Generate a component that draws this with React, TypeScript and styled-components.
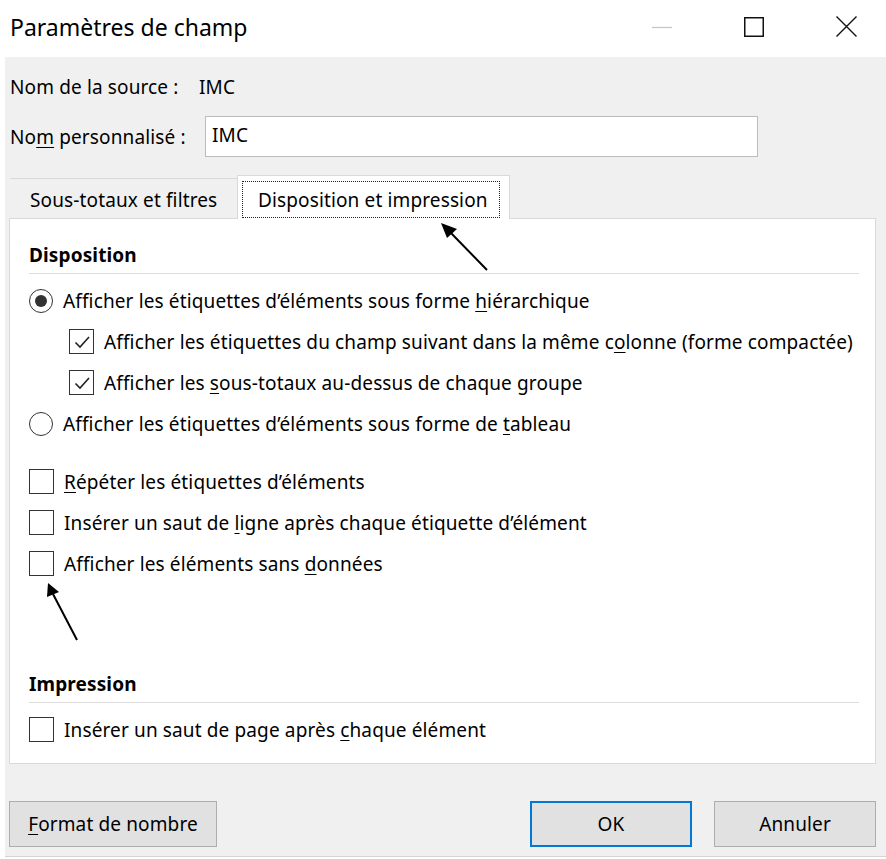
import React from "react";
import styled, { createGlobalStyle } from "styled-components";

const Global = createGlobalStyle`
  html, body { margin: 0; padding: 0; background: #ffffff; }
  body { font-family: "Noto Sans", "Open Sans", Arial, sans-serif; color: #000; }
  u { text-decoration-thickness: 1px; text-underline-offset: 3px; }
`;

const Window = styled.div`
  position: relative;
  width: 886px;
  height: 859px;
  display: flex;
  flex-direction: column;
  background: #fff;
  overflow: hidden;
`;

const TitleBar = styled.div`
  height: 57px;
  flex: 0 0 57px;
  display: flex;
  align-items: center;
  padding-left: 10px;
  background: #fff;
`;

const Title = styled.div`
  flex: 1;
  font-size: 23px;
  color: #000;
  margin-top: -3px;
`;

const WinControls = styled.div`
  display: flex;
  align-items: center;
  height: 100%;
  margin-top: -4px;
  margin-right: -6px;
`;

const WinButton = styled.div<{ $w: number }>`
  width: ${(p) => p.$w}px;
  height: 100%;
  display: flex;
  align-items: center;
  justify-content: center;
`;

const Body = styled.div`
  flex: 1;
  margin: 0 0 2px 5px;
  padding: 15px 10px 0 4px;
  background: #f0f0f0;
  border-bottom: 1px solid #d4d4d4;
  display: flex;
  flex-direction: column;
  font-size: 19px;
  letter-spacing: 0.13px;
`;

const FieldRow = styled.div<{ $h: number; $mt: number }>`
  display: flex;
  align-items: center;
  height: ${(p) => p.$h}px;
  margin-top: ${(p) => p.$mt}px;
  padding-left: 1px;
`;

const Label = styled.div<{ $w: number }>`
  width: ${(p) => p.$w}px;
  flex: 0 0 ${(p) => p.$w}px;
  white-space: nowrap;
`;

const TextInput = styled.div`
  width: 545px;
  height: 39px;
  border: 1px solid #bcbcbc;
  background: #fff;
  box-sizing: content-box;
  padding: 0 0 0 6px;
  line-height: 36px;
`;

const TabStrip = styled.div`
  display: flex;
  align-items: flex-end;
  height: 44px;
  margin-top: 18px;
  padding-left: 1px;
  position: relative;
  z-index: 1;
  margin-bottom: -1px;
`;

const Tab = styled.div<{ $active?: boolean }>`
  box-sizing: border-box;
  height: ${(p) => (p.$active ? 44 : 41)}px;
  padding: ${(p) => (p.$active ? "5px 9px 0 4px" : "2px 0 0 20px")};
  width: ${(p) => (p.$active ? 273 : 227)}px;
  background: ${(p) => (p.$active ? "#fff" : "#f0f0f0")};
  border-top: 1px solid #d9d9d9;
  border-bottom: ${(p) => (p.$active ? "none" : "1px solid #d9d9d9")};
  border-right: ${(p) => (p.$active ? "1px solid #d9d9d9" : "none")};
  border-left: ${(p) => (p.$active ? "1px solid #d9d9d9" : "none")};
  display: flex;
  align-items: ${(p) => (p.$active ? "flex-start" : "center")};
  white-space: nowrap;
`;

const FocusRect = styled.div`
  box-sizing: border-box;
  width: 260px;
  height: 37px;
  border: 1px dotted #222;
  display: flex;
  align-items: center;
  padding-left: 15px;
`;

const Panel = styled.div`
  box-sizing: border-box;
  height: 546px;
  background: #fff;
  border: 1px solid #d9d9d9;
  padding: 0 16px 0 19px;
  display: flex;
  flex-direction: column;
`;

const SectionTitle = styled.div<{ $mt: number }>`
  margin-top: ${(p) => p.$mt}px;
  font-weight: 700;
  line-height: 26px;
  padding-bottom: 5px;
  border-bottom: 1px solid #dcdcdc;
  margin-bottom: 6px;
`;

const OptionRow = styled.div<{ $indent?: number; $mt?: number }>`
  display: flex;
  align-items: center;
  height: 41px;
  gap: 10px;
  padding-left: ${(p) => p.$indent ?? 0}px;
  margin-top: ${(p) => p.$mt ?? 0}px;
  white-space: nowrap;
`;

const Radio = styled.div<{ $on?: boolean }>`
  box-sizing: border-box;
  width: 24px;
  height: 24px;
  flex: 0 0 24px;
  border-radius: 50%;
  border: 1.5px solid #333;
  display: flex;
  align-items: center;
  justify-content: center;
  &::after {
    content: "";
    display: ${(p) => (p.$on ? "block" : "none")};
    width: 12px;
    height: 12px;
    border-radius: 50%;
    background: #333;
  }
`;

const Box = styled.div`
  box-sizing: border-box;
  width: 25px;
  height: 25px;
  flex: 0 0 25px;
  border: 1.5px solid #333;
  background: #fff;
  display: flex;
  align-items: center;
  justify-content: center;
`;

const ButtonRow = styled.div`
  display: flex;
  margin-top: 37px;
  height: 46px;
`;

const Button = styled.div<{ $w: number; $primary?: boolean; $ml?: number }>`
  box-sizing: border-box;
  width: ${(p) => p.$w}px;
  height: 46px;
  margin-left: ${(p) => p.$ml ?? 0}px;
  background: #e1e1e1;
  border: ${(p) => (p.$primary ? "2px solid #0078d7" : "1px solid #adadad")};
  display: flex;
  align-items: center;
  justify-content: center;
  white-space: nowrap;
`;

const Spacer = styled.div`
  flex: 1;
`;

const Annotation = styled.svg`
  position: absolute;
  left: 0;
  top: 0;
  pointer-events: none;
`;

const Check = () => (
  <svg width="18" height="18" viewBox="0 0 18 18">
    <path d="M2.5 9.5 L7 14 L16 4" fill="none" stroke="#222" strokeWidth="1.6" />
  </svg>
);

const CheckBox = ({ checked }: { checked?: boolean }) => <Box>{checked && <Check />}</Box>;

export default function App() {
  return (
    <>
      <Global />
      <Window>
        <TitleBar>
          <Title>Paramètres de champ</Title>
          <WinControls>
            <WinButton $w={92}>
              <svg width="20" height="20" viewBox="0 0 20 20">
                <line x1="0" y1="10.5" x2="20" y2="10.5" stroke="#c4c4c4" strokeWidth="1.2" />
              </svg>
            </WinButton>
            <WinButton $w={92}>
              <svg width="20" height="20" viewBox="0 0 20 20">
                <rect x="0.75" y="0.75" width="18.5" height="18.5" fill="none" stroke="#111" strokeWidth="1.5" />
              </svg>
            </WinButton>
            <WinButton $w={92}>
              <svg width="21" height="21" viewBox="0 0 21 21">
                <path d="M0.5 0.5 L20.5 20.5 M20.5 0.5 L0.5 20.5" stroke="#111" strokeWidth="1.4" />
              </svg>
            </WinButton>
          </WinControls>
        </TitleBar>
        <Body>
          <FieldRow $h={30} $mt={0}>
            <Label $w={189}>Nom de la source :</Label>
            <span>IMC</span>
          </FieldRow>
          <FieldRow $h={41} $mt={14}>
            <Label $w={195}>
              No<u>m</u> personnalisé :
            </Label>
            <TextInput>IMC</TextInput>
          </FieldRow>
          <TabStrip>
            <Tab>Sous-totaux et filtres</Tab>
            <Tab $active>
              <FocusRect>Disposition et impression</FocusRect>
            </Tab>
          </TabStrip>
          <Panel>
            <SectionTitle $mt={23}>Disposition</SectionTitle>
            <OptionRow>
              <Radio $on />
              <span>
                Afficher les étiquettes d’éléments sous forme <u>h</u>iérarchique
              </span>
            </OptionRow>
            <OptionRow $indent={40}>
              <CheckBox checked />
              <span>
                Afficher les étiquettes du champ suivant dans la même c<u>o</u>lonne (forme compactée)
              </span>
            </OptionRow>
            <OptionRow $indent={40}>
              <CheckBox checked />
              <span>
                Afficher les <u>s</u>ous-totaux au-dessus de chaque groupe
              </span>
            </OptionRow>
            <OptionRow>
              <Radio />
              <span>
                Afficher les étiquettes d’éléments sous forme de <u>t</u>ableau
              </span>
            </OptionRow>
            <OptionRow $mt={17}>
              <CheckBox />
              <span>
                <u>R</u>épéter les étiquettes d’éléments
              </span>
            </OptionRow>
            <OptionRow>
              <CheckBox />
              <span>
                Insérer un saut de <u>l</u>igne après chaque étiquette d’élément
              </span>
            </OptionRow>
            <OptionRow>
              <CheckBox />
              <span>
                Afficher les éléments sans <u>d</u>onnées
              </span>
            </OptionRow>
            <SectionTitle $mt={87}>Impression</SectionTitle>
            <OptionRow>
              <CheckBox />
              <span>
                Insérer un saut de page après <u>c</u>haque élément
              </span>
            </OptionRow>
          </Panel>
          <ButtonRow>
            <Button $w={208}>
              <span>
                <u>F</u>ormat de nombre
              </span>
            </Button>
            <Spacer />
            <Button $w={162} $primary>
              OK
            </Button>
            <Button $w={162} $ml={22}>
              Annuler
            </Button>
          </ButtonRow>
        </Body>
        <Annotation width="886" height="859" viewBox="0 0 886 859">
          <line x1="487" y1="270" x2="450" y2="232" stroke="#000" strokeWidth="2" />
          <polygon points="441,223 457,229 447,238" fill="#000" />
          <line x1="77" y1="640" x2="53" y2="594" stroke="#000" strokeWidth="2" />
          <polygon points="48,583 59,592 47,597" fill="#000" />
        </Annotation>
      </Window>
    </>
  );
}
